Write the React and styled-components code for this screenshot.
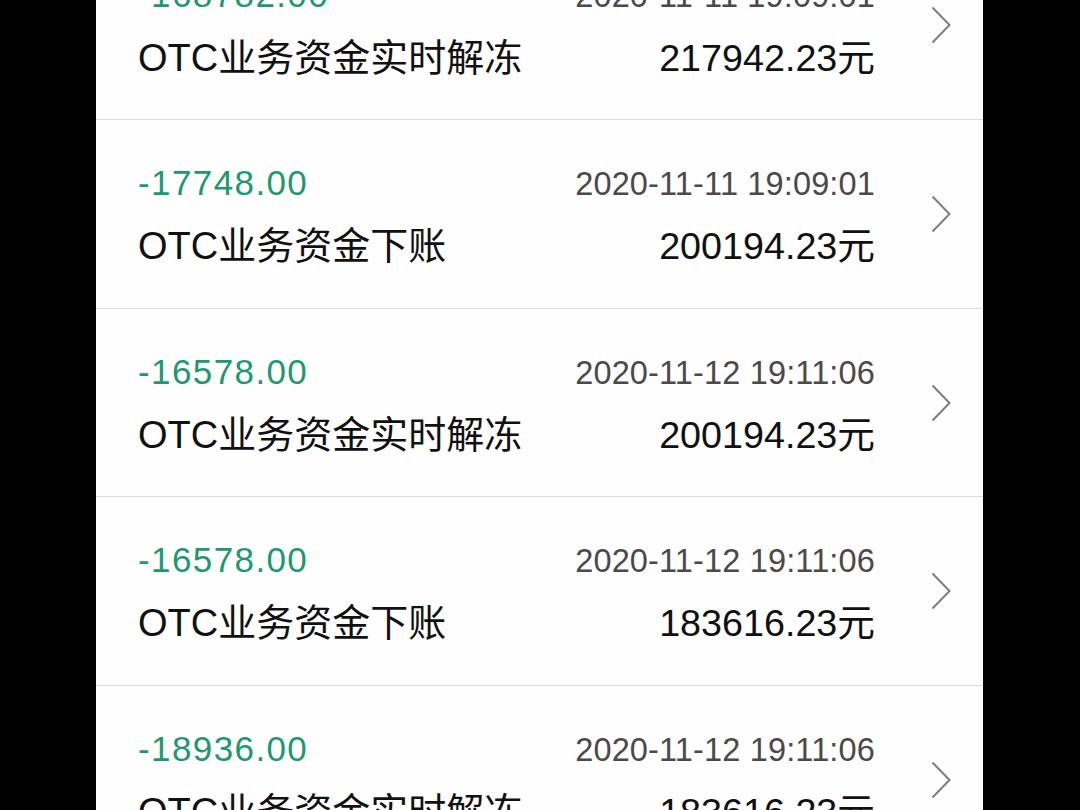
import React from "react";
import styled, { createGlobalStyle } from "styled-components";

const GlobalStyle = createGlobalStyle`
  html, body {
    margin: 0;
    padding: 0;
    background: #000;
    height: 100%;
    overflow: hidden;
  }
  #root {
    height: 100%;
  }
`;

const Page = styled.div`
  height: 810px;
  overflow: hidden;
  display: flex;
  justify-content: center;
  background: #000;
`;

const Panel = styled.div`
  width: 887px;
  margin-right: 1px;
  background: #fefefe;
  height: 100%;
  overflow: hidden;
`;

const List = styled.ul`
  list-style: none;
  margin: -68.5px 0 0 0;
  padding: 0;
`;

const Row = styled.li`
  box-sizing: border-box;
  height: 188.67px;
  border-bottom: 1.5px solid #dcdcdc;
  display: flex;
  align-items: center;
  padding: 0 32px 0 42px;
`;

const Content = styled.div`
  flex: 1;
  display: flex;
  flex-direction: column;
  align-self: stretch;
  padding-top: 43px;
  font-family: "Liberation Sans", "Noto Sans CJK SC", Arial, sans-serif;
`;

const Line = styled.div`
  display: flex;
  justify-content: space-between;
  align-items: baseline;
  height: ${(p) => p.$h}px;
  line-height: ${(p) => p.$h}px;
  margin-top: ${(p) => p.$mt || 0}px;
`;

const Change = styled.span`
  color: #1e986e;
  font-size: 35px;
  letter-spacing: 1.4px;
`;

const Time = styled.span`
  color: #4b4949;
  font-size: 32.5px;
  letter-spacing: 0.15px;
`;

const Title = styled.span`
  color: #111;
  font-size: 38px;
`;

const Balance = styled.span`
  color: #111;
  font-size: 37.7px;
`;

const Chevron = styled.svg`
  flex: none;
  margin-left: 56px;
  width: 20px;
  height: 38px;
`;

const rows = [
  { change: "-168782.00", time: "2020-11-11 19:09:01", title: "OTC业务资金实时解冻", balance: "217942.23元" },
  { change: "-17748.00", time: "2020-11-11 19:09:01", title: "OTC业务资金下账", balance: "200194.23元" },
  { change: "-16578.00", time: "2020-11-12 19:11:06", title: "OTC业务资金实时解冻", balance: "200194.23元" },
  { change: "-16578.00", time: "2020-11-12 19:11:06", title: "OTC业务资金下账", balance: "183616.23元" },
  { change: "-18936.00", time: "2020-11-12 19:11:06", title: "OTC业务资金实时解冻", balance: "183616.23元" },
];

export default function App() {
  return (
    <>
      <GlobalStyle />
      <Page>
        <Panel>
          <List>
            {rows.map((r, i) => (
              <Row key={i}>
                <Content>
                  <Line $h={40}>
                    <Change>{r.change}</Change>
                    <Time>{r.time}</Time>
                  </Line>
                  <Line $h={44} $mt={21}>
                    <Title>{r.title}</Title>
                    <Balance>{r.balance}</Balance>
                  </Line>
                </Content>
                <Chevron viewBox="0 0 20 38" fill="none">
                  <path d="M1.5 1.5 L18.5 19 L1.5 36.5" stroke="#7d7d7d" strokeWidth="2" strokeLinejoin="miter" />
                </Chevron>
              </Row>
            ))}
          </List>
        </Panel>
      </Page>
    </>
  );
}
